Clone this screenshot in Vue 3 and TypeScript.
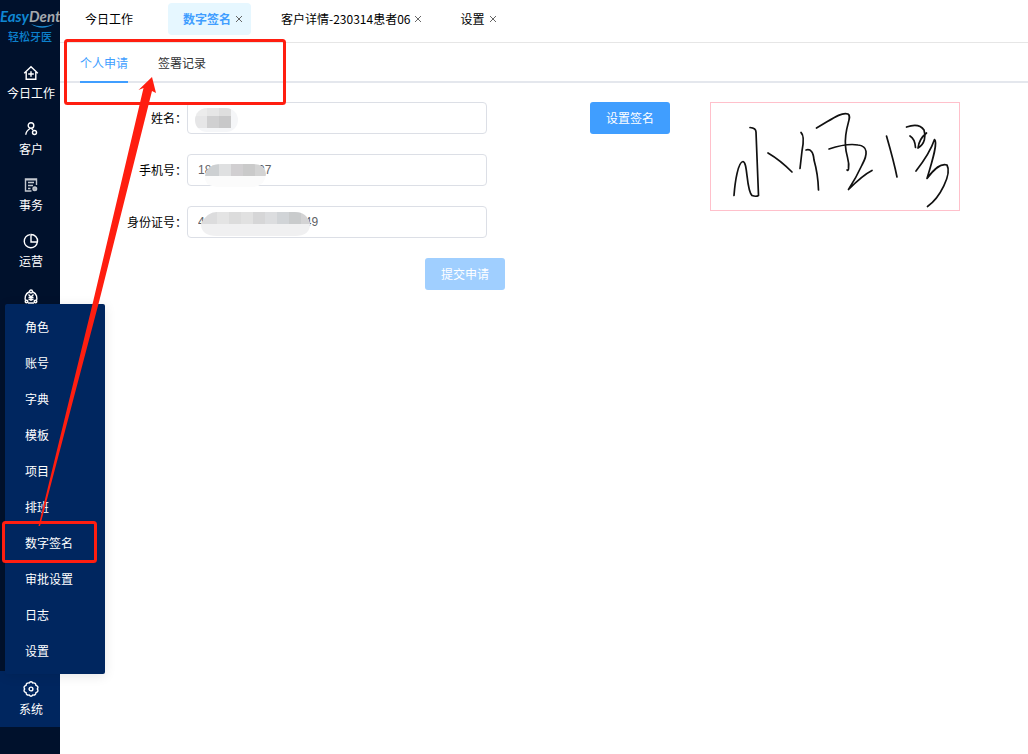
<script setup lang="ts">
import { ref } from 'vue'

interface PageTab {
  title: string
  closable: boolean
}

const pageTabs: PageTab[] = [
  { title: '今日工作', closable: false },
  { title: '数字签名', closable: true },
  { title: '客户详情-230314患者06', closable: true },
  { title: '设置', closable: true },
]
const activePage = ref(1)

const sections: string[] = ['个人申请', '签署记录']
const activeSection = ref(0)

const systemMenu: string[] = [
  '角色', '账号', '字典', '模板', '项目', '排班', '数字签名', '审批设置', '日志', '设置',
]

const name = ref('')
const phone = ref('18800000097')
const idCard = ref('400000000000000049')
</script>

<template>
  <div class="app">
    <aside class="sidebar">
      <div class="logo">
        <svg class="logo-mark" viewBox="0 0 60 28" role="img" aria-label="EasyDent">
          <text x="0" y="16" class="word easy">Easy</text>
          <text x="29" y="16" class="word dent">Dent</text>
          <path d="M31 18 Q42 25.500 54 18 Q42 22.500 31 18Z" fill="#1b8ad0" />
        </svg>
        <div class="logo-sub">轻松牙医</div>
      </div>
      <nav class="side-nav">
        <a class="side-item" href="#today">
          <svg viewBox="0 0 16 16" class="side-icon">
            <path d="M1.200 8.200 8 1.800l6.800 6.400M3.200 7V14.300h9.600V7M8 6.200v5.600M5.200 9h5.600" />
          </svg>
          <span>今日工作</span>
        </a>
        <a class="side-item" href="#customers">
          <svg viewBox="0 0 16 16" class="side-icon">
            <circle cx="8" cy="4.500" r="2.800" />
            <path d="M7 7.500C4.500 9 3 11 2.800 13.800M8.500 7.600l1.500 1.400" />
            <circle cx="11.500" cy="11.500" r="2" />
          </svg>
          <span>客户</span>
        </a>
        <a class="side-item" href="#affairs">
          <svg viewBox="0 0 16 16" class="side-icon muted">
            <path d="M13.500 8V2h-11v12h6M5 5.500h6M5 8.500h5M5 11.500h2.500M3 2.800h10" />
            <circle cx="11.800" cy="11.800" r="1.800" fill="#a9afb8" />
          </svg>
          <span>事务</span>
        </a>
        <a class="side-item" href="#operations">
          <svg viewBox="0 0 16 16" class="side-icon">
            <path d="M7 1.600A6.600 6.600 0 1 0 14.400 9H8V1.500A6.500 6.500 0 0 1 14.500 8.500" />
          </svg>
          <span>运营</span>
        </a>
        <a class="side-item" href="#finance" aria-label="财务">
          <svg viewBox="0 0 16 16" class="side-icon">
            <path d="M6 3C2.500 4.500 1 9 3 12.500M10 3c3.500 1.500 5 6 3 9.500M5 14h6M5.500 5.500 8 8l2.500-2.500M5.500 8.500h5M5.500 10.500h5M8 8v4" />
            <circle cx="8" cy="2.500" r="1.500" />
            <circle cx="3.500" cy="12.500" r="1.300" />
            <circle cx="12.500" cy="12.500" r="1.300" />
          </svg>
        </a>
        <a class="side-item current" href="#system">
          <svg viewBox="0 0 16 16" class="side-icon">
            <path d="M6.200 2Q8-.4 9.800 2Q12.800 1.500 12.900 4.300Q16 5.500 14.400 8Q16 10.500 12.900 11.700Q12.800 14.500 9.800 14Q8 16.400 6.200 14Q3.200 14.500 3.100 11.700Q0 10.500 1.600 8Q0 5.500 3.100 4.300Q3.200 1.500 6.200 2Z" />
            <circle cx="8" cy="8" r="1.900" />
          </svg>
          <span>系统</span>
        </a>
      </nav>
      <ul class="flyout">
        <li v-for="item in systemMenu" :key="item">
          <a href="#system">{{ item }}</a>
        </li>
      </ul>
    </aside>

    <main class="content">
      <header class="page-tabs">
        <div
          v-for="(tab, i) in pageTabs"
          :key="tab.title"
          class="page-tab"
          :class="{ active: i === activePage, closable: tab.closable }"
        >
          <button type="button" class="page-title" @click="activePage = i">{{ tab.title }}</button>
          <button v-if="tab.closable" type="button" class="close" :aria-label="'关闭' + tab.title">
            <svg viewBox="0 0 8 8"><path d="M1 1l6 6M7 1 1 7" /></svg>
          </button>
        </div>
      </header>

      <div class="sections">
        <button
          v-for="(section, i) in sections"
          :key="section"
          type="button"
          class="section"
          :class="{ active: i === activeSection }"
          @click="activeSection = i"
        >{{ section }}</button>
      </div>

      <div class="panel">
        <form class="form" @submit.prevent>
          <div class="row">
            <label for="name">姓名：</label>
            <div class="field">
              <input id="name" v-model="name" type="text" />
              <svg class="mask" viewBox="0 0 300 32" aria-hidden="true">
                <clipPath id="mask-name"><rect x="8" y="6" width="43" height="24" rx="12" /></clipPath>
                <g clip-path="url(#mask-name)">
                  <rect x="8" y="6" width="43" height="24" fill="#f5f6f8" />
                  <rect x="8" y="6" width="12" height="8" fill="#ececec" />
                  <rect x="20" y="6" width="12" height="8" fill="#e6e6e6" />
                  <rect x="32" y="6" width="12" height="8" fill="#dedede" />
                  <rect x="8" y="14" width="12" height="12" fill="#e6e6e7" />
                  <rect x="20" y="14" width="12" height="12" fill="#d0d0d1" />
                  <rect x="32" y="14" width="12" height="12" fill="#c8c8c9" />
                </g>
              </svg>
            </div>
          </div>
          <div class="row">
            <label for="phone">手机号：</label>
            <div class="field">
              <input id="phone" v-model="phone" type="text" />
              <svg class="mask" viewBox="0 0 300 32" aria-hidden="true">
                <clipPath id="mask-phone">
                  <path d="M18 22Q20 10 34 10H66Q78 10 79 20Q78 33 64 33H32Q17 33 18 22Z" />
                </clipPath>
                <g clip-path="url(#mask-phone)">
                  <rect x="16" y="8" width="64" height="26" fill="#fbfbfb" />
                  <rect x="16" y="8" width="16" height="14" fill="#cdd0d2" />
                  <rect x="32" y="8" width="12" height="14" fill="#dfe0e1" />
                  <rect x="44" y="8" width="12" height="14" fill="#d1cfd1" />
                  <rect x="56" y="8" width="12" height="14" fill="#cacaca" />
                  <rect x="68" y="8" width="12" height="14" fill="#d3d3d3" />
                </g>
              </svg>
            </div>
          </div>
          <div class="row">
            <label for="id-card">身份证号：</label>
            <div class="field">
              <input id="id-card" v-model="idCard" type="text" />
              <svg class="mask" viewBox="0 0 300 32" aria-hidden="true">
                <clipPath id="mask-id">
                  <path d="M14 18Q20 6 30 6H108Q120 6 123 18Q123 30 108 30H30Q14 30 14 18Z" />
                </clipPath>
                <g clip-path="url(#mask-id)">
                  <rect x="14" y="6" width="110" height="24" fill="#f0f0f1" />
                  <rect x="14" y="6" width="16" height="12" fill="#dcdcdd" />
                  <rect x="30" y="6" width="12" height="12" fill="#e4e4e4" />
                  <rect x="42" y="6" width="12" height="12" fill="#dcdcdc" />
                  <rect x="54" y="6" width="12" height="12" fill="#e1e1e1" />
                  <rect x="66" y="6" width="12" height="12" fill="#d6d6d7" />
                  <rect x="78" y="6" width="12" height="12" fill="#dcdddf" />
                  <rect x="90" y="6" width="12" height="12" fill="#d1d4d7" />
                  <rect x="102" y="6" width="12" height="12" fill="#c9cbcc" />
                  <rect x="114" y="6" width="10" height="12" fill="#d3d3d4" />
                </g>
              </svg>
            </div>
          </div>
          <button type="submit" class="btn submit" disabled>提交申请</button>
        </form>

        <button type="button" class="btn">设置签名</button>

        <div class="signature">
          <svg viewBox="1 1 248 107" role="img" aria-label="签名">
            <path d="M40 25.500Q46 26 46 30L48.500 93.500Q46 95 42 93.500C36 88 38 60 33 59.500C28 60 25 80 24 93.500" />
            <path d="M58 51Q70 58 82 70" />
            <path d="M91 30.500Q95 34 92 49L90 66.500" />
            <path d="M96 48Q103 46 104 58Q108 72 108.500 88" />
            <path d="M106.500 26C121 18 130 10 138 12C143 15 134 24 135.500 44C136 55 140 58 138.500 67Q138 69 137 68" />
            <path d="M119 47Q137 41 148 43C158 44 158 52 152 63Q146 76 138.500 87.500Q153 73 162 68.500" />
            <path d="M176.500 34Q184 60 187 75" />
            <path d="M196.500 25C202 23 210 22 214 28C216 34 215 42 208 46Q209 37 216.500 31" />
            <path d="M200 34Q205 37 205.500 45.500" />
            <path d="M206 69C213 60 221 48 224.500 37.500C228 40 223 57 217 76.500C225 66 231 61 237 63C242 72 230 96 217.500 104.500" />
          </svg>
        </div>
      </div>
    </main>

    <svg class="annotations" width="300" height="570" viewBox="0 0 300 570" aria-hidden="true">
      <rect x="65.500" y="40.500" width="219" height="63" rx="2" />
      <rect x="3.500" y="522.500" width="92" height="39" rx="2" />
      <path class="arrow" d="M152 77 156 93 152 91 99.500 300 40 526H38.500L93.500 300 143.500 88 138.500 90Z" />
    </svg>
  </div>
</template>

<style>
body {
  margin: 0;
}
</style>

<style scoped>
.app {
  position: relative;
  display: flex;
  min-height: 100vh;
  background: #fff;
  color: #000;
  font-family: "Noto Sans CJK SC", "Noto Sans", sans-serif;
  font-size: 12px;
  line-height: 20px;
}
button {
  border: 0;
  padding: 0;
  background: none;
  color: inherit;
  font: inherit;
  cursor: pointer;
}
a {
  color: inherit;
  text-decoration: none;
}

.sidebar {
  position: relative;
  flex: 0 0 60px;
  background: #00112c;
  color: #fff;
}
.logo {
  height: 48px;
  padding-top: 6px;
  box-sizing: border-box;
  overflow: hidden;
}
.logo-mark {
  display: block;
  width: 60px;
  height: 28px;
}
.word {
  font-family: Lato, "Noto Sans", sans-serif;
  font-size: 15px;
  font-style: italic;
  font-weight: 700;
}
.easy {
  fill: #0f87d2;
}
.dent {
  fill: #a5a9ae;
}
.logo-sub {
  margin-top: -7px;
  color: #0c80cc;
  font-size: 11px;
  font-weight: 500;
  line-height: 18px;
  text-align: center;
}
.side-nav {
  display: flex;
  flex-direction: column;
  padding-top: 7px;
}
.side-item {
  display: flex;
  flex-direction: column;
  align-items: center;
  gap: 2px;
  height: 56px;
  padding: 10px 0 0 2px;
  box-sizing: border-box;
  white-space: nowrap;
}
.side-item.current {
  margin-top: 336px;
  background: #00265f;
}
.side-icon {
  flex: none;
  width: 16px;
  height: 16px;
  fill: none;
  stroke: #fff;
  stroke-width: 1.4;
}
.side-icon.muted {
  stroke: #c4c9d0;
}
.flyout {
  position: absolute;
  top: 304px;
  left: 5px;
  width: 100px;
  margin: 0;
  padding: 5px 0;
  box-sizing: border-box;
  border-radius: 2px;
  background: #00265f;
  box-shadow: 0 2px 12px rgba(0, 0, 0, 0.1);
  list-style: none;
}
.flyout a {
  display: block;
  padding: 0 20px;
  line-height: 36px;
}

.content {
  flex: 1;
  min-width: 0;
}
.page-tabs {
  display: flex;
  gap: 15px;
  height: 43px;
  padding: 3px 10px 0;
  box-sizing: border-box;
  border-bottom: 1px solid #e6e6e6;
}
.page-tab {
  display: flex;
  align-items: center;
  gap: 4px;
  height: 32px;
  padding: 0 20px 0 15px;
  border-radius: 4px;
  white-space: nowrap;
}
.page-tab.closable {
  padding-right: 8px;
}
.page-tab.active {
  background: #e6f7ff;
}
.page-tab.active .page-title {
  color: #409eff;
  font-weight: 700;
}
.close,
.close svg {
  display: block;
  width: 8px;
  height: 8px;
}
.close path {
  fill: none;
  stroke: #666;
  stroke-width: 1;
}
.sections {
  display: flex;
  gap: 30px;
  height: 40px;
  padding: 0 20px;
  border-bottom: 2px solid #e4e7ed;
  margin-bottom: 19px;
  box-sizing: border-box;
}
.section {
  height: 40px;
  padding-top: 2px;
  border-bottom: 2px solid transparent;
  color: #303133;
}
.section.active {
  border-color: #409eff;
  color: #409eff;
}

.panel {
  display: flex;
  align-items: flex-start;
  padding: 0 20px;
}
.form {
  display: flex;
  flex-direction: column;
  gap: 20px;
  width: 425px;
  margin-right: 85px;
}
.row {
  display: flex;
}
.row label {
  width: 107px;
  line-height: 32px;
  text-align: right;
}
.field {
  position: relative;
  width: 300px;
}
.field input {
  display: block;
  width: 100%;
  height: 32px;
  padding: 0 10px;
  box-sizing: border-box;
  border: 1px solid #dcdfe6;
  border-radius: 4px;
  outline: none;
  background: #fff;
  color: #606266;
  font-family: "Liberation Sans", Arial, sans-serif;
  font-size: 12px;
}
.mask {
  position: absolute;
  inset: 0;
  width: 100%;
  height: 32px;
  overflow: visible;
  pointer-events: none;
}
.btn {
  width: 80px;
  height: 32px;
  border-radius: 3px;
  background: #409eff;
  color: #fff;
}
.btn.submit {
  align-self: flex-end;
  background: #a0cfff;
}
.signature {
  width: 250px;
  margin-left: 40px;
  box-sizing: border-box;
  border: 1px solid #ffc0cb;
}
.signature svg {
  display: block;
  width: 100%;
}
.signature path {
  fill: none;
  stroke: #111;
  stroke-width: 1.7;
  stroke-linecap: round;
  stroke-linejoin: round;
}

.annotations {
  position: absolute;
  top: 0;
  left: 0;
  pointer-events: none;
}
.annotations rect {
  fill: none;
  stroke: #ff1e10;
  stroke-width: 3;
}
.annotations .arrow {
  fill: #ff1e10;
}
</style>
